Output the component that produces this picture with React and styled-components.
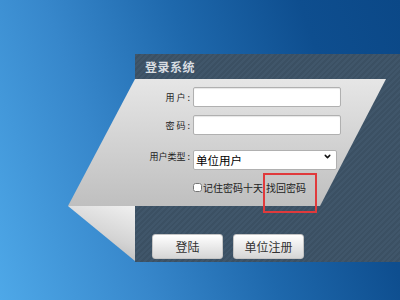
import styled, { createGlobalStyle } from "styled-components";
import { ChevronDown } from "lucide-react";

const GlobalStyle = createGlobalStyle`
  html, body { margin: 0; padding: 0; }
  body {
    width: 400px;
    height: 300px;
    overflow: hidden;
    font-family: "Noto Sans CJK SC", "Noto Sans", sans-serif;
  }
`;

const Page = styled.div`
  width: 400px;
  height: 300px;
  box-sizing: border-box;
  padding: 54px 0 0 135px;
  background: linear-gradient(70deg, #4ea8e8 0%, #3787cb 30%, #1e68ac 55%, #0e4e8f 80%, #0b4887 100%);
`;

const Panel = styled.section`
  width: 265px;
  height: 208px;
  display: flex;
  flex-direction: column;
  background: repeating-linear-gradient(-45deg, #40566a 0 2px, #3b5063 2px 4px);
`;

const TitleBar = styled.h2`
  margin: 0;
  height: 25px;
  padding-left: 10px;
  display: flex;
  align-items: center;
  font-size: 12px;
  font-weight: bold;
  letter-spacing: 0.5px;
  color: #d8dde2;
`;

const FormCard = styled.form`
  position: relative;
  isolation: isolate;
  margin: 0 0 0 -67px;
  width: 318px;
  height: 127px;
  box-sizing: border-box;
  padding-top: 8px;
  display: flex;
  flex-direction: column;
  &::before {
    content: "";
    position: absolute;
    inset: 0;
    z-index: -1;
    background: linear-gradient(180deg, #e6e6e6, #bfbfbf);
    clip-path: polygon(67px 0, 100% 0, 252px 100%, 0 100%);
  }
`;

const Field = styled.div`
  display: grid;
  grid-template-columns: 122px auto;
  column-gap: 3px;
  align-items: center;
  margin-top: ${(p) => p.$gap || 0}px;
`;

const Label = styled.label`
  text-align: right;
  font-size: 9px;
  color: #222;
  white-space: pre;
`;

const TextInput = styled.input`
  width: 148px;
  height: 20px;
  box-sizing: border-box;
  margin: 0;
  border: 1px solid #b0b0b0;
  border-radius: 2px;
  background: #fff;
  box-shadow: inset 0 1px 1px rgba(0, 0, 0, 0.1);
`;

const SelectBox = styled.div`
  position: relative;
  width: 144px;
  height: 20px;
  & svg {
    position: absolute;
    right: 5px;
    top: 6px;
    pointer-events: none;
  }
`;

const Select = styled.select`
  appearance: none;
  width: 100%;
  height: 100%;
  margin: 0;
  padding: 0 0 0 2px;
  box-sizing: border-box;
  border: 1px solid #b0b0b0;
  border-radius: 2px;
  background: #fff;
  font-family: inherit;
  font-size: 11.5px;
  color: #000;
`;

const CheckRow = styled.div`
  display: flex;
  align-items: center;
  margin-top: 14px;
  padding-left: 125px;
  font-size: 10px;
  color: #222;
`;

const Check = styled.input`
  width: 9px;
  height: 9px;
  margin: 0 1px 0 0;
`;

const ForgotLink = styled.a`
  position: relative;
  margin-left: 3px;
  color: #222;
  text-decoration: none;
  &::after {
    content: "";
    position: absolute;
    left: -3px;
    top: -7px;
    width: 50px;
    height: 36px;
    border: 2px solid #e03a3c;
  }
`;

const Footer = styled.div`
  display: flex;
  margin-left: -67px;
  height: 56px;
`;

const Fold = styled.div`
  width: 67px;
  height: 55px;
  background: linear-gradient(200deg, #f0f0f0, #d4d4d4 50%, #a9a9a9);
  clip-path: polygon(0 0, 100% 0, 100% 100%);
`;

const ButtonRow = styled.div`
  display: flex;
  gap: 10px;
  padding: 28px 0 0 17px;
`;

const Button = styled.button`
  width: 71px;
  height: 25px;
  padding: 0;
  border: 1px solid #c4c4c4;
  border-radius: 3px;
  background: linear-gradient(180deg, #ffffff, #e6e6e6 60%, #d6d6d6);
  font-family: inherit;
  font-size: 12px;
  color: #333;
`;

export default function App() {
  return (
    <>
      <GlobalStyle />
      <Page>
        <Panel>
          <TitleBar>登录系统</TitleBar>
          <FormCard>
            <Field>
              <Label>用 户 :</Label>
              <TextInput type="text" />
            </Field>
            <Field $gap={8}>
              <Label>密 码 :</Label>
              <TextInput type="password" />
            </Field>
            <Field $gap={11}>
              <Label>用户类型 :</Label>
              <SelectBox>
                <Select defaultValue="unit">
                  <option value="unit">单位用户</option>
                </Select>
                <ChevronDown size={9} strokeWidth={4} color="#111" />
              </SelectBox>
            </Field>
            <CheckRow>
              <Check type="checkbox" />
              <span>记住密码十天</span>
              <ForgotLink href="#">找回密码</ForgotLink>
            </CheckRow>
          </FormCard>
          <Footer>
            <Fold />
            <ButtonRow>
              <Button>登陆</Button>
              <Button>单位注册</Button>
            </ButtonRow>
          </Footer>
        </Panel>
      </Page>
    </>
  );
}
